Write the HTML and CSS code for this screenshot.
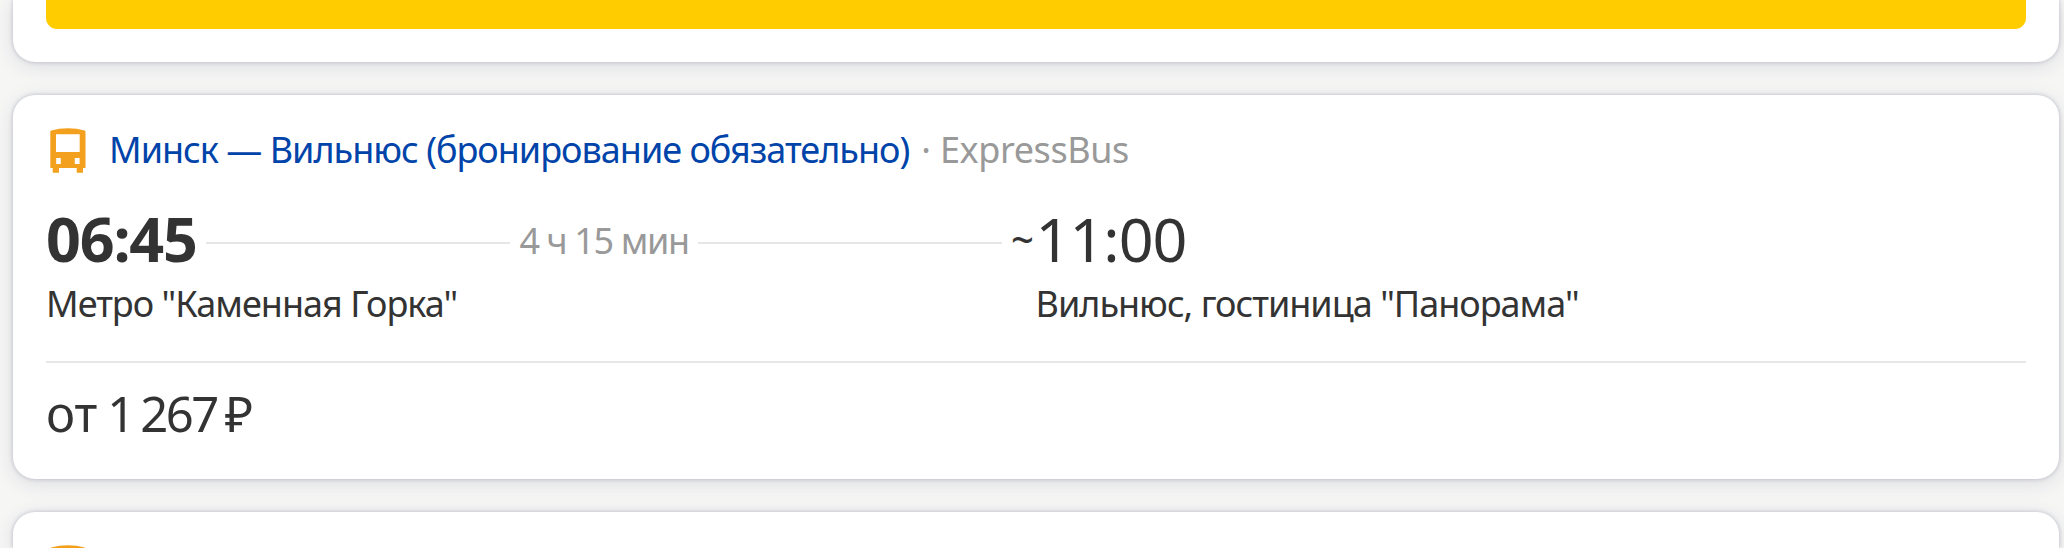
FILE: index.html
```html
<!DOCTYPE html>
<html lang="ru">

<head>
    <meta charset="UTF-8">
    <meta name="viewport" content="width=device-width, initial-scale=1.0">
    <title>Минск — Вильнюс</title>
    <link rel="stylesheet" href="styles.css">
</head>

<body>
    <div class="segments">
        <div class="segment segment-first">
            <div class="buy-button"></div>
        </div>

        <div class="segment">
            <div class="segment-header">
                <svg class="bus-icon" viewBox="0 0 36 45">
                    <path fill="#f2a01e" fill-rule="evenodd" d="M0.3 3.5Q0.3 2.7 1.2 2.4Q9 0.3 18 0.3T34.6 2.4Q35.5 2.7 35.5 3.5V40H33V44.7H26.7V40H9V44.7H2.7V40H0.3ZM6 6.3V24H29.7V6.3ZM6.2 30V36H10.8V30ZM24.8 30V36H29.6V30Z"/>
                </svg>
                <a href="#" class="segment-title">Минск — Вильнюс (бронирование обязательно)</a>
                <span class="dot">·</span>
                <span class="carrier">ExpressBus</span>
            </div>

            <div class="times">
                <div class="departure-row">
                    <span class="time time-departure">06:45</span>
                    <span class="line"></span>
                    <span class="duration">4 ч 15 мин</span>
                    <span class="line"></span>
                    <span class="tilde">~</span>
                </div>
                <span class="time time-arrival">11:00</span>
                <span class="station">Метро "Каменная Горка"</span>
                <span class="station">Вильнюс, гостиница "Панорама"</span>
            </div>

            <div class="price"><span>от</span> <span>1</span><span class="price-rest">267</span><span class="price-currency">₽</span></div>
        </div>

        <div class="segment segment-next">
            <div class="segment-header">
                <svg class="bus-icon" viewBox="0 0 36 45">
                    <path fill="#f2a01e" fill-rule="evenodd" d="M0.3 3.5Q0.3 2.7 1.2 2.4Q9 0.3 18 0.3T34.6 2.4Q35.5 2.7 35.5 3.5V40H33V44.7H26.7V40H9V44.7H2.7V40H0.3ZM6 6.3V24H29.7V6.3ZM6.2 30V36H10.8V30ZM24.8 30V36H29.6V30Z"/>
                </svg>
            </div>
        </div>
    </div>
</body>

</html>
```
FILE: styles.css
```css
* {
    box-sizing: border-box;
}

body {
    margin: 0;
    background: #f6f6f5;
    color: #333;
    font-family: 'Noto Sans', sans-serif;
    font-size: 36px;
    line-height: 44px;
}

.segments {
    display: flex;
    flex-direction: column;
    gap: 33px;
    height: 548px;
    padding: 0 5px 0 13px;
    overflow: hidden;
}

.segment {
    flex: none;
    padding: 33px 33px 36px;
    background: #fff;
    border-radius: 22px;
    box-shadow: 0 0 4px rgba(30, 40, 80, .25), 0 4px 20px rgba(30, 40, 80, .12);
}

.segment-first {
    height: 61.5px;
    padding-top: 0;
    border-radius: 0 0 22px 22px;
}

/* only the top of the next card fits on the screen */
.segment-next {
    height: 36.5px;
    padding-bottom: 0;
    border-radius: 22px 22px 0 0;
    overflow: hidden;
}

.buy-button {
    height: 28.5px;
    background: #fc0;
    border-radius: 0 0 11px 11px;
}

.segment-header {
    display: flex;
    height: 44px;
    white-space: nowrap;
}

.bus-icon {
    flex: none;
    width: 36px;
    height: 45px;
    margin: 0 23px 0 4px;
}

.segment-title {
    color: #04a;
    text-decoration: none;
    letter-spacing: -1px;
}

.dot {
    margin: 0 9px 0 12px;
    color: #999;
}

.carrier {
    color: #999;
    letter-spacing: -.4px;
}

.times {
    display: grid;
    grid-template-columns: 989.5px 1fr;
    row-gap: 7px;
    margin-top: 31px;
    padding-bottom: 35.5px;
    border-bottom: 2px solid #e6e6e6;
    white-space: nowrap;
}

.departure-row {
    display: flex;
    align-items: center;
}

.time {
    font-size: 61px;
    line-height: 72px;
}

.time-departure {
    width: 151px;
    font-weight: 700;
    letter-spacing: -1.2px;
}

.time-arrival {
    letter-spacing: -1px;
}

.line {
    flex: 1;
    height: 2px;
    margin: 8px 9px 0;
    background: #e6e6e6;
}

.duration {
    margin-top: 4px;
    color: #999;
    letter-spacing: -1.4px;
}

.tilde {
    width: 24.5px;
    font-size: 40px;
    font-weight: 500;
}

.station {
    letter-spacing: -1px;
}

.price {
    margin-top: 19.5px;
    font-size: 49px;
    line-height: 60px;
    word-spacing: -3px;
}

.price-rest {
    margin-left: 5px;
    letter-spacing: -2.5px;
}

.price-currency {
    margin-left: 8px;
}
```
